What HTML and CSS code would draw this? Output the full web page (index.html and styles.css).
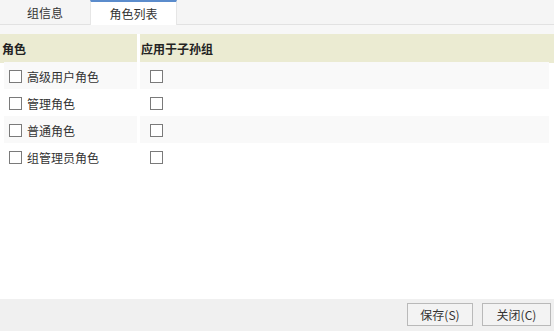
FILE: index.html
```html
<!DOCTYPE html>
<html lang="zh">
<head>
<meta charset="utf-8">
<link rel="stylesheet" href="styles.css">
</head>
<body>
<div class="app">
  <div class="tabs">
    <div class="tab">组信息</div>
    <div class="tab active">角色列表</div>
  </div>
  <div class="content">
    <div class="thead">
      <div class="th">角色</div>
      <div class="th">应用于子孙组</div>
    </div>
    <div class="row shaded">
      <div class="cell c1"><span class="cb"></span><span>高级用户角色</span></div>
      <div class="cell c2"><span class="cb"></span></div>
    </div>
    <div class="row">
      <div class="cell c1"><span class="cb"></span><span>管理角色</span></div>
      <div class="cell c2"><span class="cb"></span></div>
    </div>
    <div class="row shaded">
      <div class="cell c1"><span class="cb"></span><span>普通角色</span></div>
      <div class="cell c2"><span class="cb"></span></div>
    </div>
    <div class="row">
      <div class="cell c1"><span class="cb"></span><span>组管理员角色</span></div>
      <div class="cell c2"><span class="cb"></span></div>
    </div>
  </div>
  <div class="footer">
    <button class="btn save">保存(S)</button>
    <button class="btn close">关闭(C)</button>
  </div>
</div>
</body>
</html>
```

FILE: styles.css
```css
html, body {
  margin: 0;
  padding: 0;
  background: #ffffff;
}
body {
  font-family: "Noto Sans CJK SC", "Noto Sans", sans-serif;
  font-size: 12px;
  color: #333333;
}
.app {
  width: 554px;
  height: 331px;
  display: flex;
  flex-direction: column;
  overflow: hidden;
}
.tabs {
  height: 24px;
  background: #f5f5f5;
  border-bottom: 1px solid #e2e2e2;
  display: flex;
  flex-shrink: 0;
}
.tab {
  flex: 0 0 90px;
  display: flex;
  align-items: center;
  justify-content: center;
  padding-top: 1px;
  box-sizing: border-box;
  height: 24px;
}
.tab.active {
  flex: 0 0 87px;
  background: #ffffff;
  border-top: 2px solid #5b8ccc;
  border-left: 1px solid #e6e6e6;
  border-right: 1px solid #e6e6e6;
  padding-top: 0;
  height: 25px;
}
.content {
  flex: 1;
  padding-top: 9px;
  background: linear-gradient(#f7f7f7, #f7f7f7) top / 100% 9px no-repeat, #ffffff;
}
.thead {
  display: grid;
  grid-template-columns: 137px 1fr;
  column-gap: 3px;
  height: 28px;
}
.th {
  background: #ebebd2;
  font-weight: bold;
  line-height: 28px;
  padding-top: 1px;
  padding-left: 2px;
  box-sizing: border-box;
  color: #222222;
}
.th + .th {
  padding-left: 1px;
}
.row {
  display: grid;
  grid-template-columns: 133px 1fr;
  column-gap: 3px;
  margin: 0 5px 0 4px;
  height: 27px;
}
.cell {
  display: flex;
  align-items: center;
  gap: 5px;
  padding-top: 2px;
  box-sizing: border-box;
}
.row.shaded .cell {
  background: #f9f9f9;
}
.c1 {
  padding-left: 5px;
}
.c2 {
  padding-left: 10px;
}
.cb {
  width: 11px;
  height: 11px;
  border: 1px solid #7a7a7a;
  background: #ffffff;
  flex-shrink: 0;
}
.footer {
  height: 32px;
  background: #f0f0f0;
  display: flex;
  justify-content: flex-end;
  align-items: flex-start;
  gap: 9px;
  padding: 4px 3px 0 0;
  box-sizing: border-box;
  flex-shrink: 0;
}
.btn {
  height: 23px;
  border: 1px solid #b9b9b9;
  background: #f3f3f3;
  font-family: "Noto Sans CJK SC", "Noto Sans", sans-serif;
  font-size: 12px;
  color: #333333;
  padding: 0;
  margin: 0;
}
.btn.save {
  width: 66px;
}
.btn.close {
  width: 69px;
}
```
